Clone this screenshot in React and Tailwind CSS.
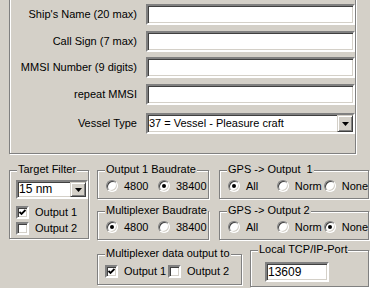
import React from 'react';

// Win2000-style form: etched group boxes, sunken fields
const etched = 'border border-[#808080] shadow-[inset_1px_1px_0_#fff,1px_1px_0_#fff]';
const sunken = 'border-2 border-t-[#808080] border-l-[#808080] border-r-white border-b-white shadow-[inset_1px_1px_0_#404040,inset_-1px_-1px_0_#d4d0c8] bg-white';
const raised = 'border border-t-[#d4d0c8] border-l-[#d4d0c8] border-r-[#404040] border-b-[#404040] shadow-[inset_1px_1px_0_#fff,inset_-1px_-1px_0_#808080] bg-[#d4d0c8]';

function Group({ label, className, children }) {
  return (
    <div className={`relative ${etched} ${className}`}>
      <span className="absolute left-[7px] top-[-8px] bg-[#d4d0c8] px-[1px] leading-[13px] whitespace-pre">{label}</span>
      {children}
    </div>
  );
}

function Radio({ checked }) {
  return (
    <span className="w-3 h-3 rounded-full bg-white border border-t-[#808080] border-l-[#808080] border-r-white border-b-white shadow-[inset_1px_1px_0_#404040,inset_-1px_-1px_0_#d4d0c8] flex items-center justify-center shrink-0">
      {checked && <span className="w-1 h-1 rounded-full bg-black" />}
    </span>
  );
}

function Check({ checked }) {
  return (
    <span className={`w-[13px] h-[13px] shrink-0 flex items-center justify-center ${sunken}`}>
      {checked && (
        <svg width="7" height="7" viewBox="0 0 7 7">
          <polyline points="0.5,3 2.5,5 6.5,1" fill="none" stroke="#000" strokeWidth="1.8" />
        </svg>
      )}
    </span>
  );
}

function Arrow() {
  return (
    <span className={`w-4 h-full flex items-center justify-center shrink-0 ${raised}`}>
      <svg width="7" height="4" viewBox="0 0 7 4">
        <polygon points="0,0 7,0 3.5,4" fill="#000" />
      </svg>
    </span>
  );
}

function Option({ checked, label, className }) {
  return (
    <div className={`flex items-center gap-[6px] ${className}`}>
      <Radio checked={checked} />
      <span>{label}</span>
    </div>
  );
}

function Box({ checked, label, className }) {
  return (
    <div className={`flex items-center gap-[6px] ${className}`}>
      <Check checked={checked} />
      <span>{label}</span>
    </div>
  );
}

const fields = [
  { label: "Ship's Name (20 max)", mt: 'mt-0' },
  { label: 'Call Sign (7 max)', mt: 'mt-[6px]' },
  { label: 'MMSI Number (9 digits)', mt: 'mt-[5px]' },
  { label: 'repeat MMSI', mt: 'mt-[6px]' },
];

export default function App() {
  return (
    <div className="w-[370px] h-[288px] overflow-hidden bg-[#d4d0c8] text-black text-[11px] leading-[13px] font-['Liberation_Sans',Arial,sans-serif]">
      {/* ship data */}
      <div className={`ml-[9px] w-[347px] -mt-[20px] pt-[23px] pb-[19px] ${etched}`}>
        {fields.map((f) => (
          <div key={f.label} className={`flex items-center ${f.mt}`}>
            <span className="w-[127px] text-right">{f.label}</span>
            <div className={`ml-[9px] w-[209px] h-[21px] ${sunken}`} />
          </div>
        ))}
        <div className="flex items-center mt-[8px]">
          <span className="w-[127px] text-right">Vessel Type</span>
          <div className={`ml-[9px] w-[209px] h-[21px] flex items-center ${sunken}`}>
            <span className="flex-1 pl-[1px]">37 = Vessel - Pleasure craft</span>
            <Arrow />
          </div>
        </div>
      </div>

      {/* options */}
      <div className="flex ml-[9px] mt-[16px] gap-[8px] items-start">
        <Group label="Target Filter" className="w-[80px] h-[69px] pt-[9px]">
          <div className={`ml-[6px] w-[72px] h-[19px] flex items-center text-[12px] ${sunken}`}>
            <span className="flex-1 pl-[1px]">15 nm</span>
            <Arrow />
          </div>
          <Box checked label="Output 1" className="ml-[6px] mt-[7px]" />
          <Box label="Output 2" className="ml-[6px] mt-[3px]" />
        </Group>

        <div className="flex flex-col">
          <div className="flex gap-[10px]">
            <Group label="Output 1 Baudrate" className="w-[112px] h-[29px] flex items-center pl-[8px] pt-[3px]">
              <Option label="4800" className="w-[52px]" />
              <Option checked label="38400" />
            </Group>
            <Group label="GPS -> Output  1" className="w-[150px] h-[29px] flex items-center pl-[8px] pt-[3px]">
              <Option checked label="All" className="w-[49px]" />
              <Option label="Norm" className="w-[47px]" />
              <Option label="None" />
            </Group>
          </div>
          <div className="flex gap-[10px] mt-[12px]">
            <Group label="Multiplexer Baudrate" className="w-[112px] h-[29px] flex items-center pl-[8px] pt-[3px]">
              <Option checked label="4800" className="w-[52px]" />
              <Option label="38400" />
            </Group>
            <Group label="GPS -> Output 2" className="w-[150px] h-[29px] flex items-center pl-[8px] pt-[3px]">
              <Option label="All" className="w-[49px]" />
              <Option label="Norm" className="w-[47px]" />
              <Option checked label="None" />
            </Group>
          </div>
          <div className="flex gap-[8px] mt-[10px] items-start">
            <Group label="Multiplexer data output to" className="mt-[4px] w-[145px] h-[31px] flex items-center pl-[7px] pt-[4px]">
              <Box checked label="Output 1" className="w-[63px]" />
              <Box label="Output 2" />
            </Group>
            <Group label="Local TCP/IP-Port" className="w-[119px] h-[37px] pl-[14px] pt-[11px]">
              <div className={`w-[64px] h-[20px] flex items-center pl-[1px] text-[12px] ${sunken}`}>13609</div>
            </Group>
          </div>
        </div>
      </div>
    </div>
  );
}
